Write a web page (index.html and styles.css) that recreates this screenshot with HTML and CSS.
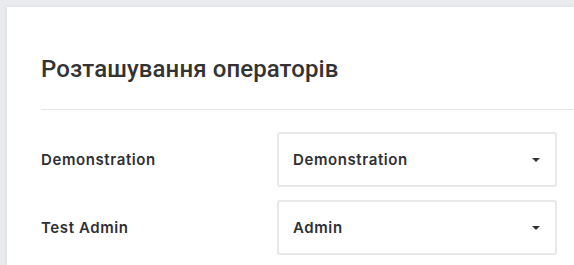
FILE: index.html
```html
<!DOCTYPE html>
<html lang="uk">
<head>
<meta charset="utf-8">
<link rel="stylesheet" href="styles.css">
</head>
<body>
<div class="page">
  <section class="card">
    <h2 class="card-title">Розташування операторів</h2>
    <hr class="divider">
    <div class="rows">
      <div class="row">
        <span class="row-label">Demonstration</span>
        <div class="select">
          <span class="select-value">Demonstration</span>
          <span class="caret"></span>
        </div>
      </div>
      <div class="row">
        <span class="row-label">Test Admin</span>
        <div class="select">
          <span class="select-value">Admin</span>
          <span class="caret"></span>
        </div>
      </div>
    </div>
  </section>
</div>
</body>
</html>
```

FILE: styles.css
```css
html, body {
  margin: 0;
  padding: 0;
  overflow: hidden;
  background: #e9ebee;
}

.page {
  padding: 7px 0 0 7px;
}

.card {
  background: #ffffff;
  box-shadow: 0 0 4px rgba(0, 0, 0, 0.08);
  padding: 48px 0 10px 34px;
}

.card-title {
  margin: 0;
  font-family: Roboto, "Liberation Sans", sans-serif;
  font-weight: 500;
  font-size: 24px;
  line-height: 28px;
  color: #333333;
  letter-spacing: 0.1px;
}

.divider {
  margin: 26px 0 0 0;
  border: 0;
  height: 1px;
  background: #e6e6e6;
}

.rows {
  display: flex;
  flex-direction: column;
  gap: 13px;
  padding-top: 22px;
}

.row {
  display: grid;
  grid-template-columns: 236px 280px;
  align-items: center;
}

.row-label,
.select-value {
  font-family: Inter, "Noto Sans", sans-serif;
  font-weight: 600;
  font-size: 15px;
  letter-spacing: 0.6px;
  color: #2f3033;
}

.select {
  box-sizing: border-box;
  height: 55px;
  border: 2px solid #e8e8e8;
  border-radius: 3px;
  display: flex;
  align-items: center;
  justify-content: space-between;
  padding: 0 15px 0 14px;
}

.caret {
  width: 0;
  height: 0;
  border-left: 4px solid transparent;
  border-right: 4px solid transparent;
  border-top: 4px solid #333333;
}
```
